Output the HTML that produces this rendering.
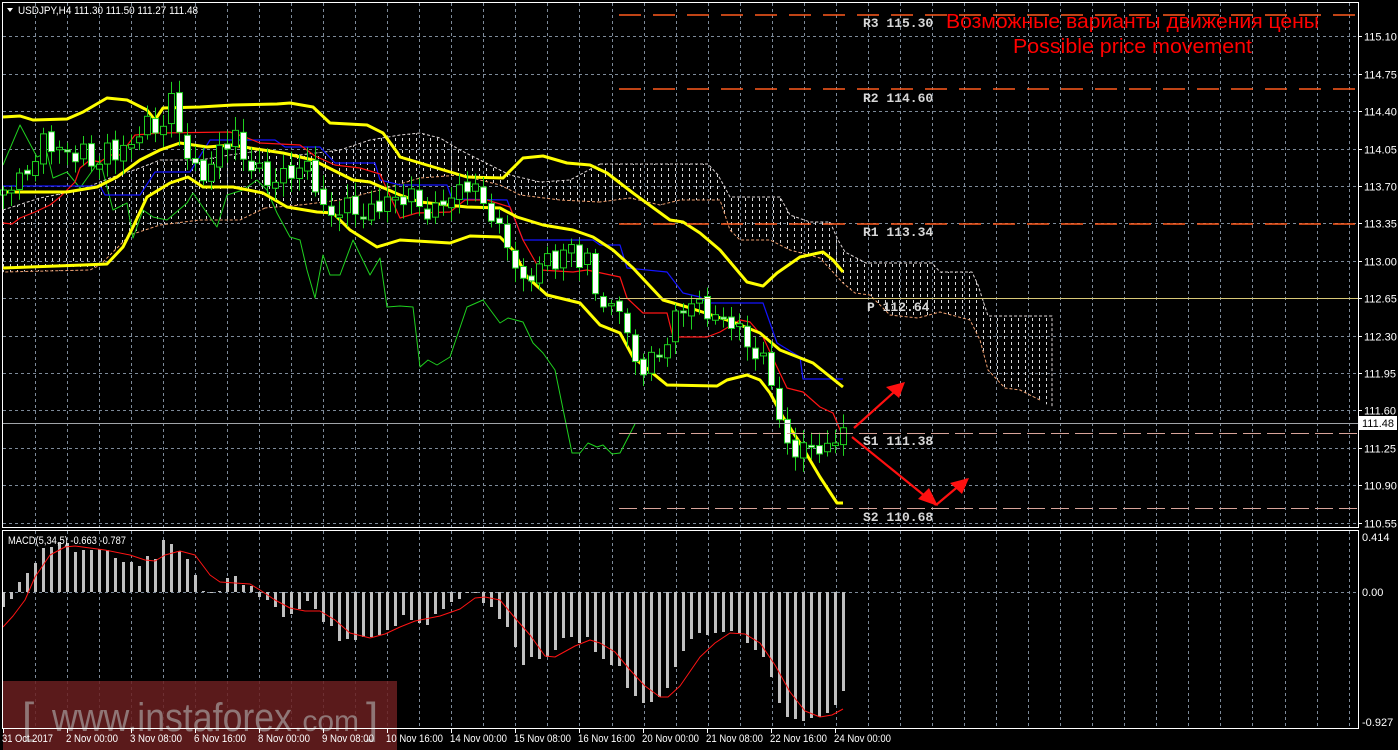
<!DOCTYPE html>
<html><head><meta charset="utf-8">
<style>
html,body{margin:0;padding:0;background:#000;width:1398px;height:750px;overflow:hidden}
svg{position:absolute;left:0;top:0}
text{font-family:"Liberation Sans",sans-serif}
</style></head>
<body>
<svg id="s" width="1398" height="750" xmlns="http://www.w3.org/2000/svg">
<defs>
<pattern id="hatch" x="0" y="0" width="7" height="6" patternUnits="userSpaceOnUse">
<line x1="3.5" y1="0" x2="3.5" y2="3" stroke="#d8d8d8" stroke-width="1"/>
</pattern>
</defs>
<g id="grid"></g>
<g id="cloud"></g>
<g id="lines"></g>
<g id="candles"></g>
<g id="macd"></g>
<rect x="3" y="681" width="394" height="69" fill="#6a1e20" fill-opacity="0.85"/>
<text x="22" y="733" font-size="44" fill="#8f7676">[</text>
<text x="52" y="731" font-size="40" fill="#8f7676" textLength="240" lengthAdjust="spacingAndGlyphs">www.instaforex</text>
<text x="294" y="731" font-size="30" fill="#8f7676">.com</text>
<text x="366" y="733" font-size="44" fill="#8f7676">]</text>
<rect x="2.5" y="2.5" width="1356" height="525" fill="none" stroke="#fff" stroke-width="1"/>
<rect x="2.5" y="530.5" width="1356" height="198" fill="none" stroke="#fff" stroke-width="1"/>
<line x1="619" y1="15" x2="1358" y2="15" stroke="#ff5a1e" stroke-width="1.5" stroke-dasharray="22,12"/>
<line x1="619" y1="89" x2="1358" y2="89" stroke="#ff5a1e" stroke-width="1.5" stroke-dasharray="22,12"/>
<line x1="619" y1="224" x2="1358" y2="224" stroke="#ff5a1e" stroke-width="1.5" stroke-dasharray="22,12"/>
<line x1="620" y1="298.5" x2="1358" y2="298.5" stroke="#d8c878" stroke-width="1"/>
<line x1="3" y1="423.5" x2="1358" y2="423.5" stroke="#a0a4a8" stroke-width="1"/>
<line x1="619" y1="433.5" x2="1358" y2="433.5" stroke="#d8a49a" stroke-width="1" stroke-dasharray="18,6"/>
<line x1="619" y1="508.5" x2="1358" y2="508.5" stroke="#d8a49a" stroke-width="1" stroke-dasharray="18,6"/>
<g font-size="13" font-weight="bold" fill="#d8d8d8">
<text x="863" y="27" style="font-family:'Liberation Mono',monospace">R3 115.30</text>
<text x="863" y="102" style="font-family:'Liberation Mono',monospace">R2 114.60</text>
<text x="863" y="236" style="font-family:'Liberation Mono',monospace">R1 113.34</text>
<text x="867" y="311" style="font-family:'Liberation Mono',monospace">P 112.64</text>
<text x="863" y="445" style="font-family:'Liberation Mono',monospace">S1 111.38</text>
<text x="863" y="521" style="font-family:'Liberation Mono',monospace">S2 110.68</text>
</g>
<text x="946" y="28" font-size="20" fill="#ff0000" textLength="373" lengthAdjust="spacingAndGlyphs">Возможные варианты движения цены</text>
<text x="1013" y="53" font-size="20" fill="#ff0000" textLength="239" lengthAdjust="spacingAndGlyphs">Possible price movement</text>
<g stroke="#ff1010" stroke-width="2.2" fill="none">
<line x1="854" y1="428" x2="903" y2="384"/>
<line x1="852" y1="437" x2="936" y2="505"/>
<line x1="936" y1="505" x2="967" y2="479"/>
</g>
<g fill="#ff1010">
<polygon points="905,382 886,387 899,398"/>
<polygon points="938,506 918,499 929,488"/>
<polygon points="969,478 950,483 962,494"/>
</g>
<polygon points="7,8 13,8 10,12" fill="#fff"/>
<text x="18" y="14" font-size="11" fill="#fff" textLength="180" lengthAdjust="spacingAndGlyphs">USDJPY,H4  111.30 111.50 111.27 111.48</text>
<text x="8" y="544" font-size="11" fill="#fff" textLength="118" lengthAdjust="spacingAndGlyphs">MACD(5,34,5) -0.663 -0.787</text>
<g id="axis" font-size="11" fill="#fff"></g>
<rect x="1359" y="416" width="38" height="14" fill="#fff"/>
<text x="1362" y="427" font-size="11" fill="#000">111.48</text>
<text x="1362" y="541" font-size="11" fill="#fff">0.414</text>
<text x="1362" y="596" font-size="11" fill="#fff">0.00</text>
<text x="1362" y="726" font-size="11" fill="#fff">-0.927</text>
<g font-size="11" fill="#fff">
<text x="2" y="742" textLength="51" lengthAdjust="spacingAndGlyphs">31 Oct 2017</text>
<text x="66" y="742" textLength="52" lengthAdjust="spacingAndGlyphs">2 Nov 00:00</text>
<text x="130" y="742" textLength="52" lengthAdjust="spacingAndGlyphs">3 Nov 08:00</text>
<text x="194" y="742" textLength="52" lengthAdjust="spacingAndGlyphs">6 Nov 16:00</text>
<text x="258" y="742" textLength="52" lengthAdjust="spacingAndGlyphs">8 Nov 00:00</text>
<text x="322" y="742" textLength="52" lengthAdjust="spacingAndGlyphs">9 Nov 08:00</text>
<text x="386" y="742" textLength="57" lengthAdjust="spacingAndGlyphs">10 Nov 16:00</text>
<text x="450" y="742" textLength="57" lengthAdjust="spacingAndGlyphs">14 Nov 00:00</text>
<text x="514" y="742" textLength="57" lengthAdjust="spacingAndGlyphs">15 Nov 08:00</text>
<text x="578" y="742" textLength="57" lengthAdjust="spacingAndGlyphs">16 Nov 16:00</text>
<text x="642" y="742" textLength="57" lengthAdjust="spacingAndGlyphs">20 Nov 00:00</text>
<text x="706" y="742" textLength="57" lengthAdjust="spacingAndGlyphs">21 Nov 08:00</text>
<text x="770" y="742" textLength="57" lengthAdjust="spacingAndGlyphs">22 Nov 16:00</text>
<text x="834" y="742" textLength="57" lengthAdjust="spacingAndGlyphs">24 Nov 00:00</text>
</g>
<g id="ticks" stroke="#fff"></g>
</svg>
<script>
(function(){
var NS="http://www.w3.org/2000/svg";
function el(p,t,a){var e=document.createElementNS(NS,t);for(var k in a)e.setAttribute(k,a[k]);document.getElementById(p).appendChild(e);return e;}
function pl(p,pts,c,w,extra){var a={points:pts.map(function(q){return q.join(",")}).join(" "),fill:"none",stroke:c,"stroke-width":w,"stroke-linejoin":"round"};for(var k in extra)a[k]=extra[k];return el(p,"polyline",a);}
for(var x=34.6;x<1358;x+=32.05){var xx=Math.round(x)+0.5;el("grid","line",{x1:xx,y1:3,x2:xx,y2:527,stroke:"#7d8a99","stroke-dasharray":"3,3"});el("grid","line",{x1:xx,y1:531,x2:xx,y2:728,stroke:"#7d8a99","stroke-dasharray":"3,3"});}
var labs=["115.10","114.75","114.40","114.05","113.70","113.35","113.00","112.65","112.30","111.95","111.60","111.25","110.90","110.55"];
for(var i=0;i<14;i++){var y=Math.round(36.3+i*37.4)+0.5;el("grid","line",{x1:3,y1:y,x2:1358,y2:y,stroke:"#7d8a99","stroke-dasharray":"3,3"});
 var t=el("axis","text",{x:1364,y:y+4});t.textContent=labs[i];el("ticks","line",{x1:1358,y1:y,x2:1362,y2:y});}
el("grid","line",{x1:3,y1:592.5,x2:1358,y2:592.5,stroke:"#7d8a99","stroke-dasharray":"3,3"});
[3,67,131,195,259,323,387,451,515,579,643,707,771,835].forEach(function(x){el("ticks","line",{x1:x+0.5,y1:729,x2:x+0.5,y2:733});});
function cloud(tp,bt){var pts=tp.concat(bt);var s=pts.map(function(q){return q.join(",")}).join(" ");
 el("cloud","polygon",{points:s,fill:"url(#hatch)",stroke:"none"});
 pl("cloud",tp,"#e0d8d8",1,{"stroke-dasharray":"3,2"});pl("cloud",bt,"#f0a070",1,{"stroke-dasharray":"3,2"});}
cloud([[3,210],[40,198],[80,190],[110,178],[140,168],[160,160],[200,160],[230,155],[265,150]],
 [[265,208],[240,220],[200,220],[160,225],[130,235],[100,265],[90,270],[3,272]]);
cloud([[265,150],[300,155],[340,150],[370,140],[400,135],[420,133],[440,138],[460,150],[480,160],[510,175],[540,182],[570,180],[600,164]],
 [[600,202],[560,200],[520,195],[500,185],[480,180],[460,175],[420,178],[380,190],[340,200],[300,205],[265,208]]);
cloud([[600,164],[708,164],[718,175],[730,197],[780,197],[790,215],[810,222],[830,222],[838,240],[845,252],[866,263],[932,263],[940,272],[972,272],[978,285],[988,316],[1052,316],[1052,408]],
 [[1040,400],[1020,390],[1005,388],[988,370],[980,340],[970,320],[940,312],[918,318],[890,315],[870,295],[855,293],[843,283],[820,258],[790,250],[770,240],[740,240],[730,230],[720,200],[680,200],[660,205],[630,198],[600,202]]);
pl("lines",[[3,165],[20,125],[37,157],[47,153],[53,178],[67,172],[80,188],[100,160],[113,210],[127,203],[133,238],[143,210],[153,217],[167,220],[187,203],[193,193],[207,213],[217,227],[227,195],[243,190],[257,180],[267,190],[277,213],[290,237],[300,240],[307,270],[315,298],[323,255],[330,275],[340,275],[353,240],[370,275],[380,258],[387,307],[400,306],[413,307],[420,367],[428,360],[437,365],[450,357],[467,307],[483,300],[500,323],[508,318],[523,322],[533,343],[543,353],[555,370],[572,453],[580,453],[588,443],[597,447],[603,445],[612,454],[620,453],[635,424]],"#1fd11f",1);
pl("lines",[[3,186],[100,186],[105,195],[140,195],[155,172],[190,172],[210,140],[275,140],[285,147],[320,147],[335,163],[375,163],[380,180],[400,185],[447,185],[452,199],[507,200],[523,240],[593,240],[600,245],[620,245],[627,268],[667,272],[683,293],[700,297],[707,303],[763,303],[777,343],[800,357],[803,379],[843,379]],"#1414ff",1.2);
pl("lines",[[3,223],[12,224],[20,218],[35,212],[50,205],[60,197],[75,182],[80,168],[90,160],[100,162],[110,155],[120,155],[135,135],[160,133],[230,132],[245,137],[260,143],[300,145],[315,156],[335,165],[360,168],[380,174],[400,218],[417,213],[450,212],[465,200],[487,200],[510,207],[523,240],[540,270],[573,272],[587,270],[620,277],[627,298],[643,313],[667,313],[673,337],[707,337],[720,332],[740,320],[750,322],[763,337],[777,367],[787,388],[803,392],[820,407],[833,413],[843,437]],"#ff1414",1.2);
var Y="#ffff00";
pl("lines",[[3,117],[20,116],[33,120],[67,119],[83,112],[107,98],[127,100],[147,110],[155,120],[163,108],[200,107],[233,105],[277,104],[290,103],[313,107],[330,123],[367,125],[383,133],[397,152],[400,157],[467,177],[503,178],[523,158],[543,156],[567,163],[590,165],[607,173],[633,193],[670,220],[683,222],[700,233],[720,250],[747,282],[763,286],[777,273],[800,257],[823,252],[833,260],[843,272]],Y,3);
pl("lines",[[3,192],[67,192],[97,187],[117,177],[140,160],[160,150],[180,143],[207,147],[233,145],[250,148],[283,153],[313,160],[333,170],[353,180],[370,182],[400,195],[420,202],[467,207],[500,208],[517,217],[543,225],[573,230],[593,237],[613,250],[633,268],[663,300],[687,307],[733,322],[760,333],[780,350],[813,363],[843,387]],Y,3);
pl("lines",[[3,268],[83,265],[107,264],[123,247],[133,227],[147,197],[170,183],[188,177],[203,187],[233,187],[263,193],[287,207],[317,212],[333,213],[350,230],[377,247],[400,240],[450,243],[470,236],[500,237],[513,250],[527,277],[547,295],[580,303],[600,325],[620,333],[633,357],[667,385],[717,386],[727,380],[747,375],[760,380],[770,393],[783,417],[800,443],[820,477],[837,503],[843,503]],Y,3);
var kp=[[3,190],[19,180],[35,160],[43,140],[51,145],[59,150],[67,152],[75,155],[83,150],[91,165],[99,160],[107,150],[115,155],[123,145],[131,150],[139,130],[147,120],[155,135],[163,120],[171,100],[179,130],[187,155],[195,170],[203,175],[211,165],[219,150],[227,142],[235,135],[243,160],[251,165],[259,170],[267,182],[275,180],[283,175],[291,172],[299,170],[307,165],[315,185],[323,210],[331,215],[339,210],[347,205],[355,210],[363,215],[371,210],[379,205],[387,200],[395,200],[403,198],[411,195],[419,205],[427,215],[435,210],[443,200],[451,198],[459,190],[467,185],[475,188],[483,205],[491,215],[499,230],[507,245],[515,265],[523,285],[531,275],[539,265],[547,258],[555,262],[563,255],[571,245],[579,262],[587,260],[595,290],[603,305],[611,310],[619,305],[627,335],[635,365],[643,368],[651,358],[659,355],[667,340],[675,318],[683,308],[691,303],[699,305],[707,312],[715,318],[723,318],[731,322],[739,330],[747,345],[755,355],[763,360],[771,380],[779,420],[787,448],[795,450],[803,447],[811,448],[819,448],[827,450],[835,440],[843,425]];
function interp(x){for(var i=0;i<kp.length-1;i++){if(x<=kp[i+1][0]){var a=kp[i],b=kp[i+1];return a[1]+(b[1]-a[1])*(x-a[0])/(b[0]-a[0]);}}return kp[kp.length-1][1];}
var prev=195;
for(var i=0;i<106;i++){var x=3+8*i;var c=interp(x)+Math.sin(i*2.3)*7;var o=prev+Math.sin(i*1.7)*3;
 if(Math.abs(c-o)<2)c=o+2;var tp=Math.min(o,c),bt=Math.max(o,c);var hi=tp-4-Math.abs(Math.sin(i*3.1))*10,lo=bt+4+Math.abs(Math.cos(i*2.7))*10;
 el("candles","line",{x1:x+0.5,y1:hi,x2:x+0.5,y2:lo,stroke:"#1fd11f"});
 el("candles","rect",{x:x-2.5,y:tp,width:6,height:bt-tp,fill:(c<o?"#000":"#fff"),stroke:"#1fd11f","stroke-width":1});
 prev=c;}
var h=[-15,-7,10,19,29,44,45,50,49,40,42,42,43,42,34,30,30,26,36,33,52,48,41,33,17,1,-1,1,14,16,7,6,-5,-8,-15,-25,-22,-17,-9,-17,-30,-34,-49,-47,-48,-45,-45,-43,-38,-34,-23,-28,-31,-33,-22,-17,-10,-7,0,0,-11,-15,-27,-35,-55,-73,-65,-67,-65,-58,-46,-45,-51,-45,-60,-67,-73,-74,-96,-104,-111,-110,-105,-96,-75,-59,-47,-41,-43,-41,-40,-39,-41,-51,-58,-65,-85,-111,-125,-127,-129,-126,-125,-121,-113,-99];
for(var i=0;i<h.length;i++){var x=3+8*i;var v=h[i];if(v==0)v=-1;el("macd","rect",{x:x-1,y:v>0?592-v:592,width:3,height:Math.abs(v),fill:"#c0c0c0"});}
pl("macd",[[3,627],[13,616],[25,600],[35,577],[50,555],[65,547],[75,546],[90,548],[105,550],[130,555],[145,560],[155,561],[165,555],[180,551],[195,555],[210,575],[220,582],[235,583],[250,584],[260,590],[275,600],[290,608],[305,611],[320,611],[335,620],[350,633],[370,638],[385,634],[400,627],[415,621],[430,618],[440,616],[460,609],[475,598],[485,597],[500,600],[515,618],[530,635],[545,656],[555,657],[575,646],[590,640],[600,643],[615,652],[630,670],[645,686],[660,697],[668,697],[680,686],[700,657],[715,643],[730,633],[745,634],[760,643],[775,665],[790,692],[805,711],[820,717],[832,715],[843,709]],"#ff1414",1);
})();
</script>
</body></html>
